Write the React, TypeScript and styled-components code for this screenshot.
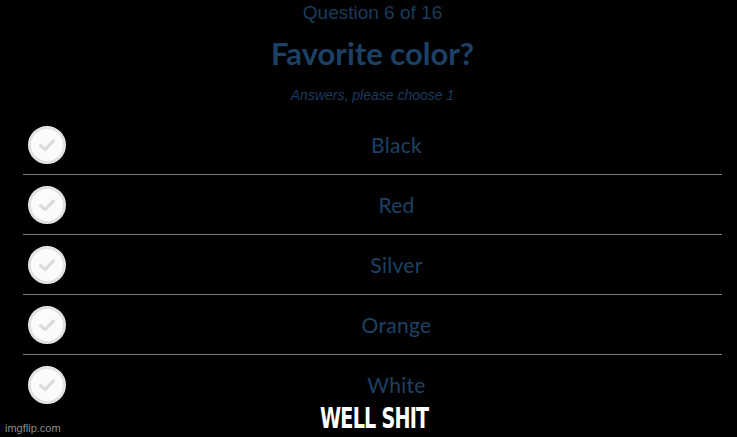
import React from "react";
import styled, { createGlobalStyle } from "styled-components";

const Global = createGlobalStyle`
  html, body { margin: 0; padding: 0; background: #000; }
  body { width: 737px; height: 437px; overflow: hidden; }
`;

const Page = styled.div`
  position: relative;
  width: 737px;
  height: 437px;
  background: #000;
  overflow: hidden;
`;

const Quiz = styled.div`
  margin: 0 15px 0 23px;
  display: flex;
  flex-direction: column;
`;

const Header = styled.div`
  display: flex;
  flex-direction: column;
  align-items: center;
`;

const Counter = styled.div`
  font-family: "Liberation Sans", Arial, sans-serif;
  font-size: 19px;
  line-height: 20px;
  color: #1b3b5b;
  margin-top: 3px;
`;

const Title = styled.h1`
  margin: 12px 0 0;
  font-family: "Lato", "Open Sans", sans-serif;
  font-weight: 700;
  font-size: 31px;
  line-height: 36px;
  color: #1d4165;
`;

const Subtitle = styled.div`
  margin-top: 15px;
  font-family: "Liberation Sans", Arial, sans-serif;
  font-style: italic;
  font-size: 14px;
  line-height: 18px;
  color: #1b3b5b;
`;

const List = styled.div`
  margin-top: 11px;
  display: flex;
  flex-direction: column;
`;

const Row = styled.div<{ $last?: boolean }>`
  height: 59px;
  display: flex;
  align-items: center;
  border-bottom: ${(p) => (p.$last ? "none" : "1px solid #7a7a7a")};
  box-sizing: content-box;
`;

const CheckCell = styled.div`
  width: 48px;
  display: flex;
  padding-left: 5px;
  box-sizing: border-box;
`;

const Circle = styled.div`
  width: 38px;
  height: 38px;
  border-radius: 50%;
  background: #fbfbfb;
  border: 3px solid #e2e2e2;
  box-sizing: border-box;
  display: flex;
  align-items: center;
  justify-content: center;
`;

const Label = styled.div`
  flex: 1;
  text-align: center;
  font-family: "Lato", "Open Sans", sans-serif;
  font-size: 21px;
  color: #1d4164;
  letter-spacing: 0.3px;
`;

const Watermark = styled.div`
  position: absolute;
  left: 5px;
  bottom: 3px;
  font-family: "Liberation Sans", Arial, sans-serif;
  font-size: 11px;
  color: #8a8a8a;
`;

const Caption = styled.div`
  position: absolute;
  left: 0;
  right: 0;
  top: 402px;
  text-align: center;
  padding-left: 15px;
  font-family: "DejaVu Sans Condensed", "DejaVu Sans", sans-serif;
  font-weight: 700;
  font-size: 28px;
  line-height: 34px;
  color: #fff;
  letter-spacing: -1px;
  transform: scaleX(0.76);
  text-shadow: -1px -1px 0 #000, 1px -1px 0 #000, -1px 1px 0 #000, 1px 1px 0 #000, 0 0 1px #fff;
`;

const Check = () => (
  <svg width="22" height="22" viewBox="0 0 22 22">
    <path d="M4.5 11.5 L9 15.5 L17.5 7" fill="none" stroke="#dcdcdc" strokeWidth="3.2" strokeLinecap="round" strokeLinejoin="round" />
  </svg>
);

const options = ["Black", "Red", "Silver", "Orange", "White"];

export default function App() {
  return (
    <Page>
      <Global />
      <Quiz>
        <Header>
          <Counter>Question 6 of 16</Counter>
          <Title>Favorite color?</Title>
          <Subtitle>Answers, please choose 1</Subtitle>
        </Header>
        <List>
          {options.map((o, i) => (
            <Row key={o} $last={i === options.length - 1}>
              <CheckCell>
                <Circle>
                  <Check />
                </Circle>
              </CheckCell>
              <Label>{o}</Label>
            </Row>
          ))}
        </List>
      </Quiz>
      <Watermark>imgflip.com</Watermark>
      <Caption>WELL SHIT</Caption>
    </Page>
  );
}
